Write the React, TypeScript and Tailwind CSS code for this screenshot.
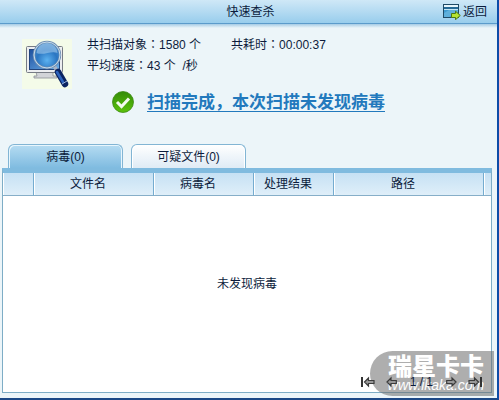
import { useState } from "react";

const tabs = [
  { id: "virus", label: "病毒(0)" },
  { id: "suspect", label: "可疑文件(0)" },
];

const columns = [
  { title: "", width: "w-[31px]" },
  { title: "文件名", width: "w-[120px]" },
  { title: "病毒名", width: "w-[100px]" },
  { title: "处理结果", width: "w-20" },
  { title: "路径", width: "" },
  { title: "", width: "w-[7px]" },
];

const ScanIcon = () => (
  <svg className="size-[50px] shrink-0 bg-[#f4fbe9]" viewBox="0 0 50 50">
    <defs>
      <linearGradient id="screen" x1="0" y1="0" x2="1" y2="1">
        <stop offset="0" stopColor="#1d4f9e" />
        <stop offset="1" stopColor="#6cb0ea" />
      </linearGradient>
      <radialGradient id="lens" cx="0.5" cy="0.7" r="0.7">
        <stop offset="0" stopColor="#5cb2f0" />
        <stop offset="0.55" stopColor="#2b76c2" />
        <stop offset="1" stopColor="#4a8fce" />
      </radialGradient>
    </defs>
    <path d="M14 33h17v4h4v2H12v-2h3z" fill="#d2d4d8" stroke="#8b8f96" strokeWidth="0.8" />
    <rect x="4.5" y="7.5" width="36" height="26" rx="1" fill="#eceef0" stroke="#777c85" />
    <rect x="7.5" y="10.5" width="30" height="20" fill="url(#screen)" stroke="#22457c" />
    <path d="M32 27l4 6" stroke="#a9b4c6" strokeWidth="3.5" />
    <path d="M36 33l7 12" stroke="#0b2460" strokeWidth="6.5" strokeLinecap="round" />
    <path d="M35 33l6 10" stroke="#2c63bd" strokeWidth="2.5" strokeLinecap="round" />
    <path d="M40 45l5-3" stroke="#9db7dd" strokeWidth="1" />
    <circle cx="25" cy="16" r="13" fill="url(#lens)" stroke="#6d8db0" strokeWidth="2.4" />
    <circle cx="25" cy="16" r="13" fill="none" stroke="#c5dcef" strokeWidth="1" />
    <path d="M14.5 14a10.5 10 0 0 1 21 0c-6-3-14 3-21 0z" fill="#c5e2f8" opacity="0.45" />
  </svg>
);

const CheckIcon = () => (
  <svg className="size-[22px] shrink-0" viewBox="0 0 22 22">
    <defs>
      <linearGradient id="ok" x1="0" y1="0" x2="0" y2="1">
        <stop offset="0" stopColor="#348c08" />
        <stop offset="1" stopColor="#5cc30b" />
      </linearGradient>
    </defs>
    <circle cx="11" cy="11" r="10.5" fill="url(#ok)" stroke="#3d8a16" strokeWidth="0.8" />
    <path d="M5 11l4.5 4.5 7.5-8" fill="none" stroke="#f4faee" strokeWidth="3" />
  </svg>
);

const BackIcon = () => (
  <svg className="h-4 w-[18px]" viewBox="0 0 18 16">
    <rect x="0.5" y="0.5" width="15" height="13" fill="#3f9bd0" stroke="#1f4a66" />
    <rect x="1" y="1" width="14" height="2" fill="#e6f5fb" />
    <rect x="1" y="3" width="14" height="2" fill="#266a96" />
    <rect x="1" y="5" width="14" height="1" fill="#c5e6f4" />
    <path d="M1 12V9l5-3h9v2L6 13H1z" fill="#5fb0dc" />
    <path d="M8.5 9.5h4v-2.300l4.800 4.300-4.800 4.200v-2.200h-4z" fill="#b5e332" stroke="#4d7a12" />
  </svg>
);

const Arrow = ({ flip }: { flip?: boolean }) => (
  <svg className={flip ? "h-3 w-[11px] -scale-x-100" : "h-3 w-[11px]"} viewBox="0 0 11 12">
    <path d="M1 6l4-4v2.5h5.300v3H5V10z" fill="#999" stroke="#3c3c3c" strokeWidth="1.2" />
  </svg>
);

const EndArrow = ({ flip }: { flip?: boolean }) => (
  <svg className={flip ? "h-3 w-[14px] -scale-x-100" : "h-3 w-[14px]"} viewBox="0 0 14 12">
    <path d="M1 1v10" stroke="#333" strokeWidth="2" />
    <path d="M3.5 6l4-4v2.5h5.500v3H7.500V10z" fill="#999" stroke="#3c3c3c" strokeWidth="1.2" />
  </svg>
);

// the TC face centres the full-width colon
const Field = ({ label, value }: { label: string; value: string }) => (
  <span>
    {label}
    <span className="font-['Liberation_Sans','Noto_Sans_CJK_TC',sans-serif] leading-none">：</span>
    {value}
  </span>
);

const App = () => {
  const [active, setActive] = useState("virus");

  return (
    <div className="flex min-h-screen flex-col border-r-2 border-b-2 border-r-[#0d4ca8] border-b-[#1c4886] bg-[#ecf5f9] font-['Liberation_Sans','Noto_Sans_CJK_SC',sans-serif] text-xs text-[#0c1c3c]">
      <header className="grid h-6 grid-cols-[1fr_auto_1fr] items-center border-b border-[#5b9bcb] bg-linear-to-b from-[#cfe8f7] to-[#98cdec] pr-2 pl-3">
        <h1 className="col-start-2">快速查杀</h1>
        <button className="flex items-center gap-0.5 justify-self-end pr-0.5">
          <BackIcon />
          返回
        </button>
      </header>
      <div className="h-1 bg-linear-to-b from-[#a5cbe5] to-[#ecf5f9]" />

      <section className="flex h-[60px] gap-[15px] pt-[11px] pl-[22px]">
        <ScanIcon />
        <div className="-mt-1 leading-[21px] whitespace-pre">
          <p className="flex gap-[30px]">
            <Field label="共扫描对象" value="1580 个" />
            <Field label="共耗时" value="00:00:37" />
          </p>
          <p>
            <Field label="平均速度" value="43 个  /秒" />
          </p>
        </div>
      </section>

      <div className="flex h-14 items-start gap-[13px] pt-[3px] pl-28">
        <CheckIcon />
        <a href="#result" className="text-[17px] leading-6 font-bold text-[#2279bd] underline decoration-1 underline-offset-3">
          扫描完成，本次扫描未发现病毒
        </a>
      </div>

      <div className="flex gap-2 pl-2" role="tablist">
        {tabs.map((tab) => (
          <button
            key={tab.id}
            role="tab"
            aria-selected={active === tab.id}
            onClick={() => setActive(tab.id)}
            className={
              active === tab.id
                ? "h-6 w-[115px] rounded-t-md border border-b-0 border-[#82b5d4] bg-linear-to-b from-[#b5dcf2] to-[#7fbbe0] shadow-[inset_1px_1px_0_#e8f6fd,inset_-1px_0_0_#e8f6fd]"
                : "h-6 w-[115px] rounded-t-md border border-b-0 border-[#82b5d4] bg-linear-to-b from-white to-[#dfebf5] shadow-[inset_1px_1px_0_#fff,inset_-1px_0_0_#fff]"
            }
          >
            {tab.label}
          </button>
        ))}
      </div>

      <main id="result" className="mr-[5px] mb-[5px] ml-0.5 flex grow flex-col border border-t-5 border-[#7eadc6] border-t-[#80bbdf] bg-white">
        <table className="w-full table-fixed border-separate border-spacing-0">
          <thead>
            <tr className="h-[23px] bg-linear-to-b from-[#c6e1f4] to-[#e0eff9]">
              {columns.map((col, i) => (
                <th
                  key={i}
                  className={`${col.width} border-r border-b border-r-[#74acd0] border-b-[#86aec8] p-0 font-normal shadow-[inset_1px_0_0_#fff] last:border-r-0`}
                >
                  <span className="block pr-[11px]">{col.title}</span>
                </th>
              ))}
            </tr>
          </thead>
        </table>
        <p className="flex grow items-center justify-center">未发现病毒</p>
        <nav className="relative z-10 flex h-5 items-center justify-end gap-[11px] pr-[9px]">
          <button aria-label="首页"><EndArrow /></button>
          <button aria-label="上一页"><Arrow /></button>
          <span className="px-0.5 whitespace-pre">1 / 1</span>
          <button aria-label="下一页"><Arrow flip /></button>
          <button aria-label="末页"><EndArrow flip /></button>
        </nav>
      </main>

      <div className="pointer-events-none absolute right-[5px] bottom-1 flex h-[45px] w-[124px] flex-col items-center justify-center rounded-l-full bg-[#6b6b6b]/55 pl-2 text-white">
        <span className="text-2xl leading-[22px] font-black">瑞星卡卡</span>
        <span className="text-sm leading-[14px] italic">www.ikaka.com</span>
      </div>
    </div>
  );
};

export default App;
